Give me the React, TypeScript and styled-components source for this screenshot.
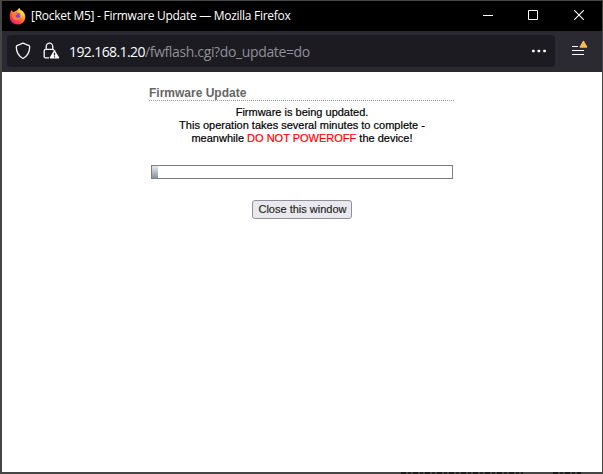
import React from "react";
import styled, { createGlobalStyle } from "styled-components";

const GlobalStyle = createGlobalStyle`
  * { box-sizing: border-box; }
  body { margin: 0; background: #454545; overflow: hidden; }
`;

const Desktop = styled.div`
  width: 603px;
  height: 474px;
  padding: 1px 1px 0 2px;
  background: #454545;
  display: flex;
  flex-direction: column;
  overflow: hidden;
`;

const TitleBar = styled.header`
  height: 30px;
  flex: none;
  background: #000;
  display: flex;
  align-items: center;
  padding-left: 7px;
`;

const Title = styled.div`
  flex: 1;
  margin-left: 5px;
  color: #fff;
  font: 12px/16px "Open Sans", "Noto Sans", sans-serif;
  letter-spacing: -0.28px;
  white-space: nowrap;
`;

const WindowButton = styled.button`
  width: 46px;
  height: 30px;
  padding: 0 0 2px;
  border: 0;
  background: none;
  display: flex;
  align-items: center;
  justify-content: center;
`;

const Toolbar = styled.div`
  height: 41px;
  flex: none;
  background: #2b2a33;
  display: flex;
  align-items: flex-start;
  padding: 4px 0 0 5px;
`;

const AddressField = styled.div`
  width: 548px;
  height: 32px;
  border-radius: 4px;
  background: #1c1b22;
  display: flex;
  align-items: center;
  padding: 0 8px;
`;

const Address = styled.div`
  flex: 1;
  margin-left: 9px;
  padding-top: 2px;
  color: #8f8f95;
  font: 14px/20px "Open Sans", "Noto Sans", sans-serif;
  letter-spacing: -0.36px;
  white-space: nowrap;
`;

const Host = styled.span`
  color: #fbfbfe;
  letter-spacing: -0.6px;
`;

const MenuButton = styled.button`
  width: 20px;
  height: 24px;
  margin: 0 0 0 15px;
  padding: 0;
  border: 0;
  background: none;
`;

const Icon = styled.svg<{ $gap?: number }>`
  display: block;
  flex: none;
  margin-left: ${({ $gap = 0 }) => $gap}px;
`;

const Page = styled.main`
  flex: none;
  height: 400px;
  background: #fff;
  display: flex;
  flex-direction: column;
  align-items: center;
  padding-top: 13px;
  font-family: "Liberation Sans", Arial, sans-serif;
`;

const Heading = styled.h1`
  width: 305px;
  height: 16px;
  margin: 0 1px 5px 0;
  border-bottom: 1px dotted #999;
  color: #666;
  font-size: 12px;
  line-height: 16px;
  font-weight: bold;
`;

const Message = styled.p`
  width: 305px;
  margin: 0;
  text-align: center;
  color: #000;
  font-size: 11px;
  line-height: 13px;
  white-space: nowrap;
  -webkit-text-stroke: 0.2px;
`;

const Warning = styled.span`
  color: #f00;
`;

const ProgressTrack = styled.div`
  width: 302px;
  height: 14px;
  margin: 20px 0 21px 0;
  border: 1px solid #7d7d7d;
`;

const ProgressFill = styled.div`
  width: 6px;
  height: 12px;
  background: linear-gradient(#e8eaed, #8490a4);
`;

const CloseButton = styled.button`
  width: 100px;
  height: 19px;
  padding: 0 0 0 1px;
  border: 1px solid #8f8f9d;
  border-radius: 3px;
  background: #e9e9ed;
  color: #222;
  font: 11px/17px "Liberation Sans", Arial, sans-serif;
  -webkit-text-stroke: 0.15px;
`;

const BehindWindow = styled.div`
  height: 2px;
  flex: none;
  display: flex;
  gap: 30px;
  padding-left: 399px;
`;

const HiddenLine = styled.div<{ $width: number }>`
  width: ${({ $width }) => $width}px;
  height: 2px;
  background: repeating-linear-gradient(90deg, #1c1c1c 0 5px, #454545 5px 7px, #242424 7px 10px, #454545 10px 12px);
`;

function FirefoxIcon() {
  return (
    <Icon width="17" height="17" viewBox="0 0 17 17">
      <defs>
        <linearGradient id="flame" x1="0.85" y1="0.05" x2="0.2" y2="0.9">
          <stop offset="0" stopColor="#fff04f" />
          <stop offset="0.4" stopColor="#ff9a24" />
          <stop offset="0.72" stopColor="#ff473d" />
          <stop offset="1" stopColor="#ed1688" />
        </linearGradient>
        <linearGradient id="globe" x1="0.7" y1="0" x2="0.3" y2="1">
          <stop offset="0" stopColor="#a34bea" />
          <stop offset="1" stopColor="#5b42c7" />
        </linearGradient>
      </defs>
      <path d="M2.5 2C3 3 3.7 3.7 4.6 3.9 5.5 3.3 6.2 3.1 7 3 8 2.3 9.1 1.2 10.2 0 11 .9 11.6 2 11.8 3 12.1 3 12.5 2.7 12.6 2.3 15 4.1 16.3 6.2 16.3 9.1A7.7 7.4 0 0 1 .8 9.2C.6 6.6 1.1 4.4 2.5 2Z" fill="url(#flame)" />
      <circle cx="8.1" cy="7.9" r="3.1" fill="url(#globe)" />
      <path d="M3.5 5.2C5 4.6 6.2 4.8 7 5.4L8.7 5.7C8.4 6.6 7.5 6.8 6.6 7.2 6.3 7.8 6.5 8.5 7 9.1 8.2 10.1 10 9.6 11.3 8.9 11 11 9.6 12.2 7.7 12.2 4.4 12.2 2.5 9 3.5 5.2Z" fill="#ff7d35" />
      <path d="M10.2 0C9.4 2.3 10.1 3.7 11.3 5 12.7 6.6 12.8 8.4 12.2 10 13.4 9.2 13.5 7.6 13.1 6.3 14.2 7.2 14.7 8.3 14.5 10 15.7 7.2 14.8 4.3 12.6 2.3 12.5 2.7 12.2 3 11.8 3 11.6 2 11 .9 10.2 0Z" fill="#ffd83b" />
    </Icon>
  );
}

function ShieldIcon() {
  return (
    <Icon width="16" height="18" viewBox="0 0 16 18" fill="none" stroke="#f4f4f7" strokeWidth="1.3" strokeLinejoin="round">
      <path d="M8 1.2 14 3.7Q14.7 4 14.7 4.8C14.7 10 12.8 14 8 16.5 3.2 14 1.3 10 1.3 4.8Q1.3 4 2 3.7Z" />
    </Icon>
  );
}

function LockIcon() {
  return (
    <Icon $gap={12} width="17" height="18" viewBox="0 0 17 18">
      <path d="M3.2 7.4V4.9a3.2 3.6 0 0 1 6.6 0v2.5M10.8 8.2Q10.6 7.4 9.7 7.4H2.7Q1.2 7.4 1.2 8.9V14.4Q1.2 15.8 2.7 15.8H6" fill="none" stroke="#f4f4f7" strokeWidth="1.35" />
      <path d="M11.8 8.3 16 15.3Q16.3 16.5 15.3 16.5H7.6Q6.6 16.5 6.9 15.3L11.1 8.3Q11.45 7.8 11.8 8.3Z" fill="#fff" />
      <path d="M11.5 10.7v2.7M11.5 14.3v1.1" stroke="#1c1b22" strokeWidth="1.2" />
    </Icon>
  );
}

export default function App() {
  return (
    <Desktop>
      <GlobalStyle />
      <TitleBar>
        <FirefoxIcon />
        <Title>[Rocket M5] - Firmware Update — Mozilla Firefox</Title>
        <WindowButton aria-label="Minimize">
          <Icon $gap={1} width="10" height="10"><path d="M0 5.5h10" stroke="#fff" /></Icon>
        </WindowButton>
        <WindowButton aria-label="Maximize">
          <Icon width="10" height="10"><path d="M.5.5h9v9h-9Z" fill="none" stroke="#fff" /></Icon>
        </WindowButton>
        <WindowButton aria-label="Close">
          <Icon width="10" height="10"><path d="m.2.2 9.6 9.6M9.8.2.2 9.8" stroke="#fff" strokeWidth="1.1" /></Icon>
        </WindowButton>
      </TitleBar>
      <Toolbar>
        <AddressField>
          <ShieldIcon />
          <LockIcon />
          <Address><Host>192.168.1.20</Host>/fwflash.cgi?do_update=do</Address>
          <Icon width="16" height="4" viewBox="0 0 16 4" fill="#fbfbfe">
            <rect x="1" y="0.7" width="2.7" height="2.6" rx="0.7" />
            <rect x="6.5" y="0.7" width="2.7" height="2.6" rx="0.7" />
            <rect x="12.2" y="0.7" width="2.7" height="2.6" rx="0.7" />
          </Icon>
        </AddressField>
        <MenuButton aria-label="Application menu">
          <Icon width="20" height="24" viewBox="0 0 20 24">
            <path d="M2 11.5h6M2 15.5h12M2 19.5h12" stroke="#fbfbfe" strokeWidth="1.2" />
            <path d="M12.8 6.2Q13.4 5.5 14 6.2L17.2 11.6Q17.4 12.8 16.4 12.8H10.4Q9.3 12.8 9.8 11.6Z" fill="#ffbd4f" />
          </Icon>
        </MenuButton>
      </Toolbar>
      <Page>
        <Heading>Firmware Update</Heading>
        <Message>
          Firmware is being updated.<br />
          This operation takes several minutes to complete -<br />
          meanwhile <Warning>DO NOT POWEROFF</Warning> the device!
        </Message>
        <ProgressTrack><ProgressFill /></ProgressTrack>
        <CloseButton>Close this window</CloseButton>
      </Page>
      <BehindWindow>
        <HiddenLine $width={122} />
        <HiddenLine $width={28} />
      </BehindWindow>
    </Desktop>
  );
}
